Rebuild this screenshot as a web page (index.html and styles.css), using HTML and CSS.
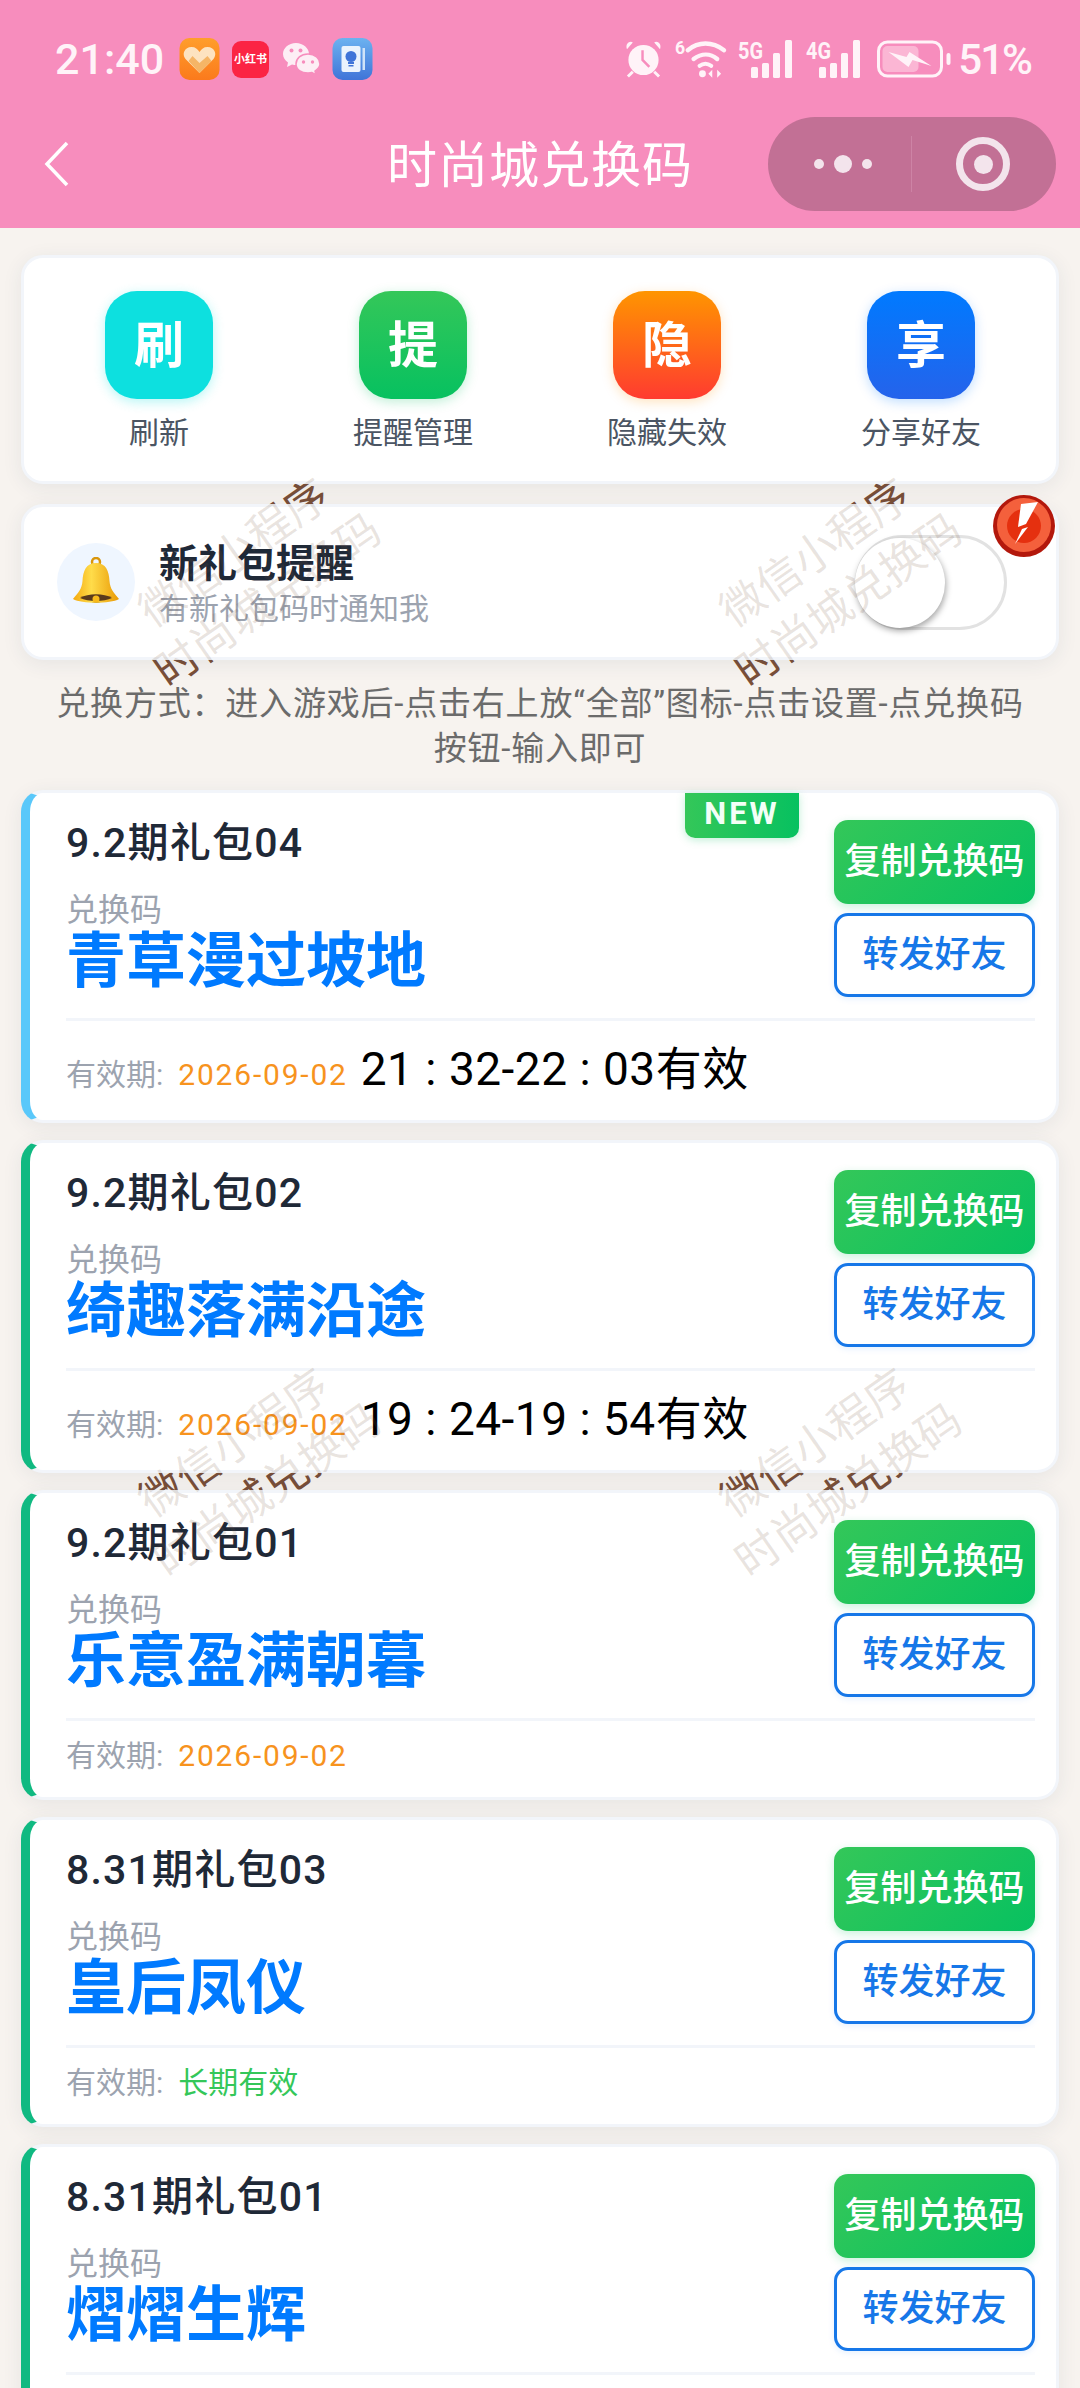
FILE: index.html
```html
<!DOCTYPE html>
<html lang="zh-CN">
<head>
<meta charset="UTF-8">
<title>时尚城兑换码</title>
<link rel="stylesheet" href="styles.css">
</head>
<body>
<div class="page">
  <div class="header">
    <div class="status">
      <div class="status-left">
        <span class="clock">21:40</span>
        <svg class="app-icon" viewBox="0 0 40 42"><defs><linearGradient id="hg" x1="0" y1="0" x2="0" y2="1"><stop offset="0" stop-color="#ff9e2c"/><stop offset="1" stop-color="#fb7a1c"/></linearGradient></defs><rect width="40" height="42" rx="10" fill="url(#hg)"/><path d="M20 35 L6 21 C2 16 5 9 12 9 C16 9 18 11 20 14 C22 11 24 9 28 9 C35 9 38 16 34 21 Z" fill="#fde3c0"/><path d="M20 35 L9 23 L13 18 L20 25 L28 18 L32 23 Z" fill="#f5b566"/></svg>
        <span class="red-book">小红书</span>
        <svg class="wechat" viewBox="0 0 38 36"><path d="M14 2 C6.500 2 1 7 1 13 C1 16.500 3 19.500 6 21.500 L5 26 L10 23.500 C11.500 24 13 24 14 24 C22 24 27 19 27 13 C27 7 21 2 14 2 Z" fill="#fdeef5"/><path d="M26 13 C19 13 14 17.500 14 23 C14 28.500 19 32 26 32 C27.500 32 28.500 32 30 31.500 L34 34 L33 30 C36 28 38 26 38 23 C38 17.500 33 13 26 13 Z" fill="#fdeef5" stroke="#f78dbd" stroke-width="1.500"/><circle cx="9.500" cy="9.500" r="2" fill="#f78dbd"/><circle cx="18.500" cy="9.500" r="2" fill="#f78dbd"/><circle cx="21.500" cy="21" r="1.700" fill="#f78dbd"/><circle cx="30.500" cy="21" r="1.700" fill="#f78dbd"/></svg>
        <svg class="app-icon" viewBox="0 0 40 42"><defs><linearGradient id="bg" x1="0" y1="0" x2="0" y2="1"><stop offset="0" stop-color="#6cb2f0"/><stop offset="1" stop-color="#3f74d8"/></linearGradient></defs><rect width="40" height="42" rx="10" fill="url(#bg)"/><rect x="9" y="8" width="19" height="26" rx="2" fill="#eaf3fd"/><rect x="30" y="10" width="2.500" height="22" fill="#cfe3f8"/><circle cx="18.500" cy="18.500" r="5.500" fill="#3f74d8"/><rect x="15.500" y="24" width="6" height="2" fill="#3f74d8"/><rect x="16" y="27" width="5" height="1.500" fill="#3f74d8"/></svg>
      </div>
      <div class="status-right">
        <svg class="sys-alarm" viewBox="0 0 38 40"><path d="M2 10 L8 3 C5 1 0 4 2 10 Z M36 10 L30 3 C33 1 38 4 36 10 Z" fill="#fff3f8"/><circle cx="19" cy="21" r="15.500" fill="#fff3f8"/><path d="M18 11 V21 L25 28" fill="none" stroke="#f78dbd" stroke-width="2.500"/><path d="M8 33 L3 38 M30 33 L35 38" stroke="#fff3f8" stroke-width="3"/></svg>
        <svg class="sys-wifi" viewBox="0 0 52 40"><text x="0" y="15" class="sig-six">6</text><path d="M13 11 C24 2 38 2 50 11" fill="none" stroke="#fff3f8" stroke-width="4.500" stroke-linecap="round"/><path d="M19 20 C27 14 36 14 43 20" fill="none" stroke="#fff3f8" stroke-width="4.500" stroke-linecap="round"/><path d="M25 27 C29 24 33 24 37 27" fill="none" stroke="#fff3f8" stroke-width="4" stroke-linecap="round"/><circle cx="28" cy="35" r="3.500" fill="#fff3f8"/><path d="M38 39 V31 L34 35 Z M43 31 V39 L47 35 Z" fill="#fff3f8"/></svg>
        <svg class="sys-signal" viewBox="0 0 56 40"><text x="0" y="20" class="sig-text" textLength="25" lengthAdjust="spacingAndGlyphs">5G</text><rect x="13" y="28" width="7" height="11" rx="1.500" fill="#fff3f8"/><rect x="24" y="24" width="7" height="15" rx="1.500" fill="#fff3f8"/><rect x="35" y="14" width="7" height="25" rx="1.500" fill="#fff3f8"/><rect x="47" y="1" width="7" height="38" rx="1.500" fill="#fff3f8"/></svg>
        <svg class="sys-signal" viewBox="0 0 56 40"><text x="0" y="20" class="sig-text" textLength="25" lengthAdjust="spacingAndGlyphs">4G</text><rect x="13" y="28" width="7" height="11" rx="1.500" fill="#fff3f8"/><rect x="24" y="24" width="7" height="15" rx="1.500" fill="#fff3f8"/><rect x="35" y="14" width="7" height="25" rx="1.500" fill="#fff3f8"/><rect x="47" y="1" width="7" height="38" rx="1.500" fill="#fff3f8"/></svg>
        <svg class="sys-battery" viewBox="0 0 74 38"><rect x="2" y="2" width="63" height="34" rx="9" fill="none" stroke="#fff3f8" stroke-width="3"/><rect x="6" y="6" width="36" height="26" rx="5" fill="#fbb6d4"/><path d="M12 12 L30 17 L33 12 L55 26 L36 20 L32 27 Z" fill="#fff3f8"/><rect x="70" y="13" width="4" height="12" rx="2" fill="#fff3f8"/></svg>
        <span class="percent">51%</span>
      </div>
    </div>
    <div class="nav">
      <svg class="back" viewBox="0 0 26 46"><path d="M23 2 L3 23 L23 44" fill="none" stroke="#fff" stroke-width="3.500"/></svg>
      <span class="nav-title">时尚城兑换码</span>
      <div class="capsule">
        <div class="capsule-dots"><i></i><i class="big"></i><i></i></div>
        <div class="capsule-line"></div>
        <div class="capsule-target"><i></i></div>
      </div>
    </div>
  </div>

  <div class="body">
    <div class="wm wm-back">
      <div class="wm-item wm1">微信小程序<br>时尚城兑换码</div>
      <div class="wm-item wm2">微信小程序<br>时尚城兑换码</div>
      <div class="wm-item wm3">微信小程序<br>时尚城兑换码</div>
      <div class="wm-item wm4">微信小程序<br>时尚城兑换码</div>
    </div>

    <div class="content">
      <div class="card tools">
        <div class="tool"><div class="tool-icon cyan">刷</div><span>刷新</span></div>
        <div class="tool"><div class="tool-icon green">提</div><span>提醒管理</span></div>
        <div class="tool"><div class="tool-icon orange">隐</div><span>隐藏失效</span></div>
        <div class="tool"><div class="tool-icon blue">享</div><span>分享好友</span></div>
      </div>

      <div class="card notify">
        <div class="bell">
          <svg viewBox="0 0 48 50" width="48" height="50"><defs><linearGradient id="bell" x1="0" y1="0" x2="1" y2="0"><stop offset="0" stop-color="#f4a90f"/><stop offset=".4" stop-color="#ffdc4a"/><stop offset="1" stop-color="#e99a06"/></linearGradient></defs><circle cx="24" cy="5" r="4" fill="none" stroke="#d9960c" stroke-width="2.500"/><ellipse cx="24" cy="41" rx="8" ry="5" fill="#5a3a1c"/><path d="M24 6 C14 6 11 14 10.500 24 C10 32 6 36 1 42 C10 47 38 47 47 42 C42 36 38 32 37.500 24 C37 14 34 6 24 6 Z" fill="url(#bell)"/><path d="M8 41 C16 36 32 36 40 41 C32 45 16 45 8 41 Z" fill="#5a3a1c"/><circle cx="24" cy="42" r="3.500" fill="#f7b91a"/></svg>
        </div>
        <div class="notify-text">
          <div class="notify-title">新礼包提醒</div>
          <div class="notify-sub">有新礼包码时通知我</div>
        </div>
        <div class="switch"><div class="knob"></div></div>
      </div>

      <p class="tips">兑换方式：进入游戏后-点击右上放“全部”图标-点击设置-点兑换码按钮-输入即可</p>

      <div class="gift sky">
        <div class="badge-new">NEW</div>
        <div class="gift-main">
          <div class="gift-info">
            <div class="gift-name">9.2期礼包04</div>
            <div class="gift-label">兑换码</div>
            <div class="gift-code">青草漫过坡地</div>
          </div>
          <div class="gift-btns"><div class="btn-copy">复制兑换码</div><div class="btn-share">转发好友</div></div>
        </div>
        <div class="gift-foot"><span class="foot-label">有效期:</span><span class="foot-date">2026-09-02</span><span class="foot-time">21 : 32-22 : 03有效</span></div>
      </div>

      <div class="gift">
        <div class="gift-main">
          <div class="gift-info">
            <div class="gift-name">9.2期礼包02</div>
            <div class="gift-label">兑换码</div>
            <div class="gift-code">绮趣落满沿途</div>
          </div>
          <div class="gift-btns"><div class="btn-copy">复制兑换码</div><div class="btn-share">转发好友</div></div>
        </div>
        <div class="gift-foot"><span class="foot-label">有效期:</span><span class="foot-date">2026-09-02</span><span class="foot-time">19 : 24-19 : 54有效</span></div>
      </div>

      <div class="gift">
        <div class="gift-main">
          <div class="gift-info">
            <div class="gift-name">9.2期礼包01</div>
            <div class="gift-label">兑换码</div>
            <div class="gift-code">乐意盈满朝暮</div>
          </div>
          <div class="gift-btns"><div class="btn-copy">复制兑换码</div><div class="btn-share">转发好友</div></div>
        </div>
        <div class="gift-foot"><span class="foot-label">有效期:</span><span class="foot-date">2026-09-02</span></div>
      </div>

      <div class="gift">
        <div class="gift-main">
          <div class="gift-info">
            <div class="gift-name">8.31期礼包03</div>
            <div class="gift-label">兑换码</div>
            <div class="gift-code">皇后凤仪</div>
          </div>
          <div class="gift-btns"><div class="btn-copy">复制兑换码</div><div class="btn-share">转发好友</div></div>
        </div>
        <div class="gift-foot"><span class="foot-label">有效期:</span><span class="foot-long">长期有效</span></div>
      </div>

      <div class="gift">
        <div class="gift-main">
          <div class="gift-info">
            <div class="gift-name">8.31期礼包01</div>
            <div class="gift-label">兑换码</div>
            <div class="gift-code">熠熠生辉</div>
          </div>
          <div class="gift-btns"><div class="btn-copy">复制兑换码</div><div class="btn-share">转发好友</div></div>
        </div>
        <div class="gift-foot foot-cut"></div>
      </div>
    </div>

    <div class="wm wm-front">
      <div class="wm-item wm1">微信小程序<br>时尚城兑换码</div>
      <div class="wm-item wm2">微信小程序<br>时尚城兑换码</div>
      <div class="wm-item wm3">微信小程序<br>时尚城兑换码</div>
      <div class="wm-item wm4">微信小程序<br>时尚城兑换码</div>
    </div>

    <svg class="float-badge" viewBox="0 0 62 62"><circle cx="31" cy="31" r="31" fill="#b3180c"/><circle cx="31" cy="30" r="27" fill="#f4603c"/><circle cx="31" cy="31" r="17" fill="#e5300f"/><path d="M28 9 L45 7 L33 29 L25 32 Z" fill="#fff"/><path d="M29 34 L35 32 L22 49 Z" fill="#fff"/></svg>
  </div>
</div>
</body>
</html>
```

FILE: styles.css
```css
*{
	padding:0;
	margin:0;
	box-sizing:border-box;
}
body{
	width:1080px;
	height:2388px;
	overflow:hidden;
	font-family:"Roboto","Noto Sans CJK SC",sans-serif;
	background:#f7f3ef;
}
i{
	display:block;
}
.page{
	height:2388px;
	overflow:hidden;
}

/* header */
.header{
	height:228px;
	background:#f78dbd;
	color:#fff;
}
.status{
	height:100px;
	padding:18px 49px 0 55px;
	display:flex;
	align-items:center;
	justify-content:space-between;
	color:#fff3f8;
}
.status-left,.status-right{
	display:flex;
	align-items:center;
}
.clock{
	font-size:43px;
	font-weight:500;
	width:124px;
}
.app-icon{
	width:41px;
	height:42px;
}
.red-book{
	width:37px;
	height:37px;
	margin:0 13px 0 12px;
	border-radius:9px;
	background:#fb2444;
	color:#fff;
	font-size:11px;
	font-weight:700;
	line-height:37px;
	text-align:center;
	white-space:nowrap;
}
.wechat{
	width:38px;
	height:36px;
	margin-right:12px;
}
.sys-alarm{
	width:37px;
	height:40px;
	margin-right:13px;
}
.sys-wifi{
	width:51px;
	height:40px;
	margin-right:12px;
	overflow:visible;
}
.sys-signal{
	width:56px;
	height:40px;
	margin-right:12px;
	overflow:visible;
}
.sys-signal + .sys-battery{
	margin-left:2px;
}
.sig-text{
	font-size:24px;
	font-weight:700;
	fill:#fff3f8;
}
.sig-six{
	font-size:18px;
	font-weight:700;
	fill:#fff3f8;
}
.sys-battery{
	width:75px;
	height:38px;
	margin-right:7px;
}
.percent{
	font-size:42px;
	font-weight:500;
	letter-spacing:-2px;
}
.nav{
	height:128px;
	padding:0 24px 0 44px;
	display:flex;
	align-items:center;
	position:relative;
}
.back{
	width:26px;
	height:46px;
}
.nav-title{
	font-size:50px;
	margin-left:317px;
	padding-bottom:6px;
	flex:1;
	letter-spacing:1px;
}
.capsule{
	width:288px;
	height:94px;
	border-radius:47px;
	background:#c27095;
	display:flex;
	align-items:center;
}
.capsule-dots{
	width:143px;
	display:flex;
	align-items:center;
	justify-content:center;
	gap:10px;
	padding-left:6px;
}
.capsule-dots i{
	width:10px;
	height:10px;
	border-radius:50%;
	background:#f3e4ec;
}
.capsule-dots i.big{
	width:18px;
	height:18px;
}
.capsule-line{
	width:1px;
	height:56px;
	background:#cd83a5;
}
.capsule-target{
	flex:1;
	display:flex;
	align-items:center;
	justify-content:center;
	padding-right:2px;
}
.capsule-target i{
	width:54px;
	height:54px;
	border:7px solid #f3e4ec;
	border-radius:50%;
}
.capsule-target i:after{
	content:'';
	display:block;
	width:19px;
	height:19px;
	margin:10.500px;
	border-radius:50%;
	background:#f3e4ec;
}

/* body */
.body{
	position:relative;
}
.content{
	position:relative;
	z-index:1;
	padding:27px 21px 0;
}
.card{
	background:#fff;
	border:3px solid #f2f5fa;
	border-radius:22px;
	box-shadow:0 4px 20px rgba(40,60,90,.08);
}
.tools{
	height:229px;
	padding:33px 8px 0;
	display:grid;
	grid-template-columns:repeat(4,1fr);
}
.tool{
	display:flex;
	flex-direction:column;
	align-items:center;
	font-size:30px;
	color:#4b5563;
}
.tool span{
	margin-top:12px;
	line-height:44px;
}
.tool-icon{
	width:108px;
	height:108px;
	border-radius:32px;
	color:#fff;
	font-size:50px;
	font-weight:700;
	line-height:110px;
	text-align:center;
}
.cyan{
	background:#0de0df;
	box-shadow:0 3px 12px rgba(13,224,223,.3);
}
.green{
	background:linear-gradient(180deg,#34c759,#07c160);
	box-shadow:0 3px 12px rgba(7,193,96,.25);
}
.orange{
	background:linear-gradient(180deg,#ff9500,#ff3b30);
	box-shadow:0 3px 12px rgba(255,149,0,.25);
}
.blue{
	background:linear-gradient(180deg,#007aff,#2563eb);
	box-shadow:0 3px 12px rgba(0,122,255,.25);
}
.notify{
	height:156px;
	margin-top:20px;
	padding:0 49px 0 33px;
	display:flex;
	align-items:center;
}
.bell{
	width:78px;
	height:78px;
	border-radius:50%;
	background:#eff6ff;
	display:flex;
	align-items:center;
	justify-content:center;
}
.notify-text{
	margin-left:24px;
	padding-top:5px;
	flex:1;
}
.notify-title{
	font-size:39px;
	font-weight:700;
	line-height:48px;
	color:#1f2937;
}
.notify-sub{
	font-size:30px;
	line-height:42px;
	color:#9ca3af;
}
.switch{
	width:152px;
	height:95px;
	border:3px solid #e2e2e2;
	border-radius:48px;
	background:#fff;
}
.knob{
	width:90px;
	height:90px;
	margin-left:-3px;
	border-radius:50%;
	background:#fff;
	box-shadow:1px 3px 6px rgba(0,0,0,.35);
}
.tips{
	padding:21px 30px 0;
	height:130px;
	font-size:33px;
	line-height:45px;
	letter-spacing:.8px;
	color:#6b6b6b;
	text-align:center;
}

/* gift cards */
.gift{
	position:relative;
	margin-bottom:17px;
	padding:22px 21px 0 36px;
	background:#fff;
	border:3px solid #f2f5fa;
	border-left:9px solid #10b981;
	border-radius:22px;
	box-shadow:0 4px 20px rgba(40,60,90,.08);
}
.sky{
	border-left-color:#5ac8fa;
}
.badge-new{
	position:absolute;
	top:0;
	right:257px;
	width:114px;
	height:45px;
	border-radius:0 0 10px 10px;
	background:linear-gradient(90deg,#34c759,#07c160);
	box-shadow:0 2px 8px rgba(7,193,96,.25);
	color:#f2fff6;
	font-size:31px;
	font-weight:700;
	line-height:42px;
	letter-spacing:3px;
	text-align:center;
}
.gift-main{
	display:flex;
	justify-content:space-between;
	padding-bottom:21px;
	border-bottom:3px solid #f2f5fa;
}
.gift-name{
	font-size:41px;
	font-weight:500;
	line-height:56px;
	letter-spacing:1.200px;
	color:#1f2937;
}
.gift-label{
	margin-top:19px;
	font-size:32px;
	line-height:40px;
	color:#9ca3af;
}
.gift-code{
	font-size:60px;
	font-weight:700;
	line-height:64px;
	color:#007aff;
}
.gift-btns{
	margin-top:5px;
	display:flex;
	flex-direction:column;
	gap:9px;
}
.btn-copy,.btn-share{
	width:201px;
	height:84px;
	border-radius:14px;
	font-size:36px;
	font-weight:500;
	line-height:84px;
	text-align:center;
	white-space:nowrap;
}
.btn-copy{
	background:linear-gradient(135deg,#34c759,#07c160);
	box-shadow:0 3px 10px rgba(7,193,96,.22);
	color:#fff;
}
.btn-share{
	border:3px solid #1677e8;
	background:#fff;
	box-shadow:0 2px 6px rgba(0,122,255,.1);
	color:#1677e8;
	line-height:78px;
}
.gift-foot{
	display:flex;
	align-items:baseline;
	padding:15px 0 21px;
	font-size:30px;
	line-height:40px;
}
.foot-cut{
	height:76px;
}
.foot-label{
	color:#9ca3af;
}
.foot-date{
	margin-left:15px;
	color:#f7931e;
	letter-spacing:1.800px;
}
.foot-long{
	margin-left:15px;
	color:#34c759;
}
.foot-time{
	margin-left:13px;
	padding-top:3px;
	font-size:46px;
	line-height:60px;
	letter-spacing:.500px;
	color:#000;
}

/* watermark */
.wm{
	position:absolute;
	top:0;
	left:0;
	width:1080px;
	height:2160px;
	pointer-events:none;
}
.wm-back{
	z-index:0;
	color:#7a4e38;
}
.wm-front{
	z-index:2;
	color:rgba(120,85,60,.16);
}
.wm-item{
	position:absolute;
	width:320px;
	font-size:44px;
	line-height:58px;
	text-align:center;
	transform:rotate(-35deg);
}
.wm1{
	left:91px;
	top:291px;
}
.wm2{
	left:672px;
	top:291px;
}
.wm3{
	left:91px;
	top:1181px;
}
.wm4{
	left:672px;
	top:1181px;
}
.float-badge{
	position:absolute;
	z-index:3;
	left:993px;
	top:267px;
	width:62px;
	height:62px;
}
```
